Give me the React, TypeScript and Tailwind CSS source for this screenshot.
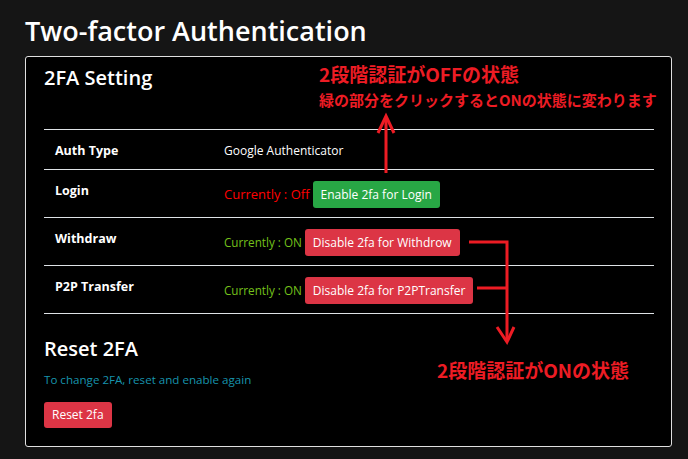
const RED = "#ed1c24";

type Row = {
  label: string;
  height: string;
  content: React.ReactNode;
};

const Btn = ({ text, color, h = "h-[27px]" }: { text: string; color: string; h?: string }) => (
  <button className={`flex items-center justify-center px-[8px] rounded-[3px] text-[12px] text-white leading-none ${h} ${color}`}>
    {text}
  </button>
);

const App = () => {
  const rows: Row[] = [
    {
      label: "Auth Type",
      height: "h-[40px]",
      content: <div className="pt-[13px] leading-[16px] text-[12px] text-white">Google Authenticator</div>,
    },
    {
      label: "Login",
      height: "h-[48px]",
      content: (
        <div className="flex items-center pt-[11px]">
          <span className="text-[13px] text-[#ff0000]">Currently : Off</span>
          <div className="ml-[3px]">
            <Btn text="Enable 2fa for Login" color="bg-[#28a745]" />
          </div>
        </div>
      ),
    },
    {
      label: "Withdraw",
      height: "h-[48px]",
      content: (
        <div className="flex items-center pt-[11px]">
          <span className="text-[11.7px] text-[#74c11b]">Currently : ON</span>
          <div className="ml-[3px]">
            <Btn text="Disable 2fa for Withdrow" color="bg-[#dc3545]" />
          </div>
        </div>
      ),
    },
    {
      label: "P2P Transfer",
      height: "h-[48px]",
      content: (
        <div className="flex items-center pt-[11px]">
          <span className="text-[11.7px] text-[#74c11b]">Currently : ON</span>
          <div className="ml-[3px]">
            <Btn text="Disable 2fa for P2PTransfer" color="bg-[#dc3545]" />
          </div>
        </div>
      ),
    },
  ];

  return (
    <div
      className="relative min-h-screen bg-[#151515] px-[25px] pt-[13px] pb-[12px] text-white"
      style={{ fontFamily: '"Open Sans", "Noto Sans", sans-serif' }}
    >
      <h1 className="text-[27px] font-semibold leading-[36px] mb-[7px]">Two-factor Authentication</h1>

      <div className="w-[647px] h-[391px] rounded-[3px] border border-[#e0e0e0] bg-black px-[18px] pt-[9px]">
        <h4 className="text-[20px] font-semibold leading-[24px]">2FA Setting</h4>

        {/* settings table */}
        <div className="mt-[39px] w-[610px]">
          {rows.map((row) => (
            <div key={row.label} className={`flex border-t border-[#dee2e6] ${row.height}`}>
              <div className="w-[180px] pl-[11px] pt-[13px] leading-[16px] text-[12.5px] font-bold">{row.label}</div>
              <div className="flex-1">{row.content}</div>
            </div>
          ))}
          <div className="border-t border-[#dee2e6]" />
        </div>

        <h4 className="mt-[23px] text-[20px] font-semibold leading-[24px]">Reset 2FA</h4>
        <p className="mt-[11px] text-[11.6px] leading-[16px] text-[#1794ad]">To change 2FA, reset and enable again</p>
        <div className="mt-[14px] flex">
          <Btn text="Reset 2fa" color="bg-[#dc3545]" h="h-[26px]" />
        </div>
      </div>

      {/* annotations */}
      <div
        className="absolute left-[319px] top-[64px] font-bold text-[#ed1c24]"
        style={{ fontFamily: '"Noto Sans CJK JP", sans-serif' }}
      >
        <div className="text-[19px] leading-[19px]">2段階認証がOFFの状態</div>
        <div className="mt-[9px] text-[15px] leading-[15px]">緑の部分をクリックするとONの状態に変わります</div>
      </div>
      <div
        className="absolute left-[437px] top-[360px] text-[19px] leading-[19px] font-bold text-[#ed1c24]"
        style={{ fontFamily: '"Noto Sans CJK JP", sans-serif' }}
      >
        2段階認証がONの状態
      </div>

      <svg className="pointer-events-none absolute left-0 top-0" width="688" height="459" fill="none">
        <g stroke={RED} strokeWidth="3">
          <line x1="386" y1="173" x2="386" y2="117" />
          <polyline points="378,133 386,116 394,133" />
          <polyline points="469,242 507,242 507,341" />
          <line x1="477" y1="288" x2="507" y2="288" />
          <polyline points="497,327 507,342 514,327" />
        </g>
      </svg>
    </div>
  );
};

export default App;
